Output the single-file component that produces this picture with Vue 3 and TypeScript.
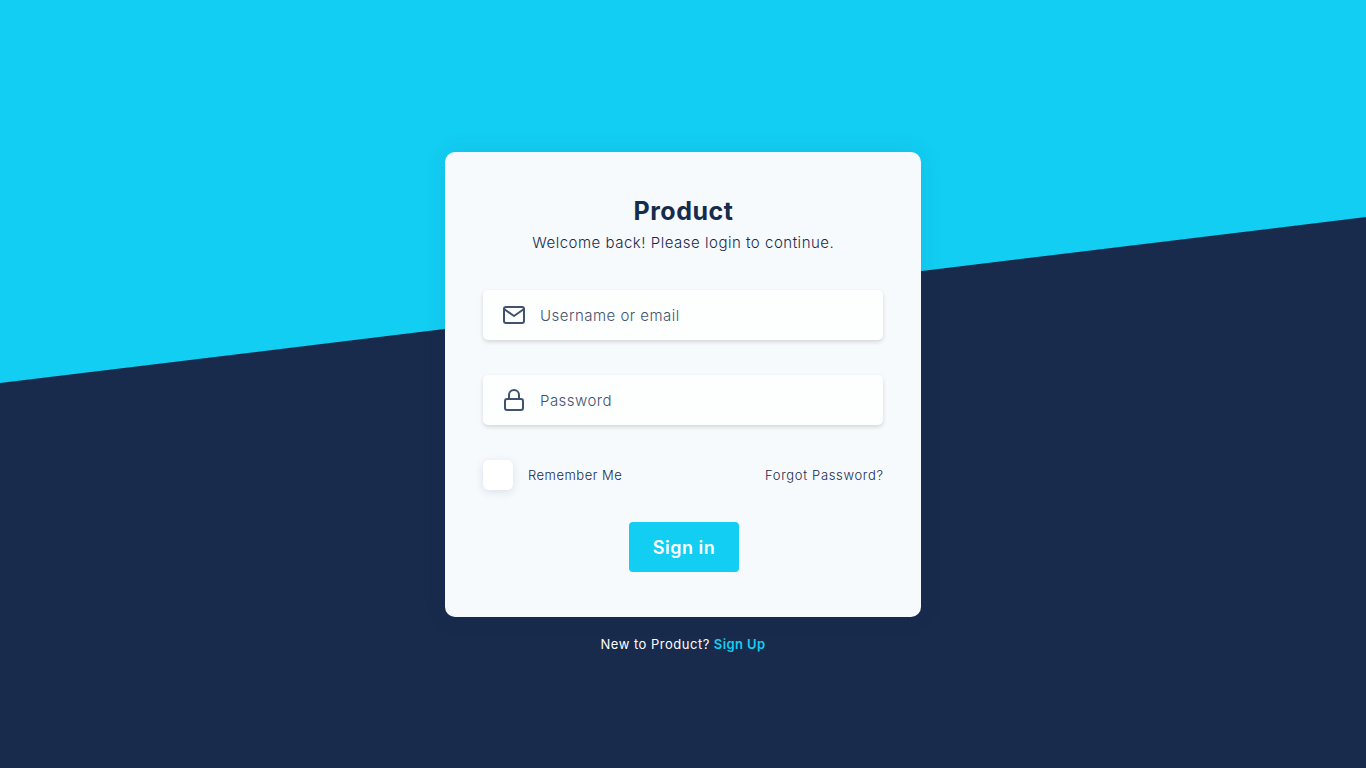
<script setup lang="ts">
import { ref } from 'vue'

const username = ref('')
const password = ref('')
const remember = ref(false)
</script>

<template>
  <main class="page">
    <form class="card" @submit.prevent>
      <h1 class="title">Product</h1>
      <p class="subtitle">Welcome back! Please login to continue.</p>
      <label class="field">
        <svg class="icon" viewBox="0 0 24 24">
          <rect x="2" y="4" width="20" height="16" rx="2" />
          <path d="M2 6l10 7 10-7" />
        </svg>
        <input v-model="username" class="input user" type="text" placeholder="Username or email" />
      </label>
      <label class="field">
        <svg class="icon" viewBox="0 0 24 24">
          <rect x="3" y="11" width="18" height="11" rx="2" />
          <path d="M7 11V7a5 5 0 0 1 10 0v4" />
        </svg>
        <input v-model="password" class="input pass" type="password" placeholder="Password" />
      </label>
      <div class="options">
        <label class="remember">
          <input v-model="remember" class="check" type="checkbox" />
          <span class="remember-text">Remember Me</span>
        </label>
        <a class="forgot">Forgot Password?</a>
      </div>
      <button class="submit" type="submit">Sign in</button>
    </form>
    <p class="signup"><span class="new">New to Product?</span><a class="link">Sign Up</a></p>
  </main>
</template>

<style>
body {
  margin: 0;
  background: #182b4d;
}
</style>

<style scoped>
.page {
  box-sizing: border-box;
  height: 768px;
  padding-top: 152px;
  display: flex;
  flex-direction: column;
  align-items: center;
  overflow: hidden;
  color: #172b4d;
  font-family: Inter, "Liberation Sans", sans-serif;
  position: relative;
  isolation: isolate;
  background: #182b4d;
}
.page::before {
  content: "";
  position: absolute;
  inset: 0;
  z-index: -1;
  background: #12cef2;
  clip-path: polygon(0 0, 100% 0, 100% 217px, 0 383px);
}
.card {
  box-sizing: border-box;
  width: 476px;
  height: 465px;
  padding: 43px 38px 0;
  border-radius: 10px;
  background: #f6fafd;
  box-shadow: 0 0 24px rgba(23, 43, 77, 0.09);
  display: flex;
  flex-direction: column;
}
.title {
  margin: 0;
  text-align: center;
  font-size: 25px;
  line-height: 33px;
  font-weight: 700;
  letter-spacing: 0.5px;
  text-indent: 1px;
}
.subtitle {
  margin: 4px 0 36px;
  text-align: center;
  font-size: 15px;
  line-height: 22px;
  font-weight: 300;
  letter-spacing: 0.51px;
  text-indent: 0.5px;
  white-space: nowrap;
}
.field {
  box-sizing: border-box;
  height: 50px;
  flex: none;
  margin-bottom: 35px;
  padding-left: 19px;
  display: flex;
  align-items: center;
  border-radius: 5px;
  background: #fdfefe;
  box-shadow: 0 2px 4px rgba(0, 0, 0, 0.14);
}
.icon {
  width: 24px;
  height: 24px;
  flex: none;
  fill: none;
  stroke: #42526e;
  stroke-width: 2;
  stroke-linejoin: round;
  stroke-linecap: round;
}
.input {
  box-sizing: border-box;
  flex: 1;
  min-width: 0;
  height: 50px;
  margin-left: 14px;
  padding: 1px 0 0;
  border: 0;
  outline: 0;
  background: transparent;
  font: 300 15px/48px Inter, "Liberation Sans", sans-serif;
  letter-spacing: 0.48px;
  color: #42526e;
}
.input::placeholder {
  color: #42526e;
  opacity: 1;
}
.options {
  height: 30px;
  display: flex;
  align-items: center;
  justify-content: space-between;
  font-size: 13px;
  font-weight: 300;
}
.remember {
  display: flex;
  align-items: center;
  gap: 15px;
  letter-spacing: 0.5px;
}
.forgot {
  letter-spacing: 0.66px;
  margin-right: -0.6px;
}
.check {
  appearance: none;
  width: 30px;
  height: 30px;
  margin: 0;
  border-radius: 6px;
  background: #fff;
  box-shadow: 0 2px 8px rgba(23, 43, 77, 0.12);
}
.submit {
  width: 110px;
  height: 50px;
  margin: 32px 0 0 146px;
  padding: 2px 0 0;
  border: 0;
  border-radius: 4px;
  background: #12cef2;
  color: #fff;
  font: 600 18px/48px Inter, "Liberation Sans", sans-serif;
  letter-spacing: 0.5px;
}
.signup {
  margin: 16px 0 0;
  display: flex;
  gap: 4px;
  color: #fff;
  font-size: 13px;
  line-height: 22px;
}
.new {
  letter-spacing: 0.5px;
}
.link {
  color: #12cef2;
  font-weight: 600;
  letter-spacing: 0.4px;
}
</style>
